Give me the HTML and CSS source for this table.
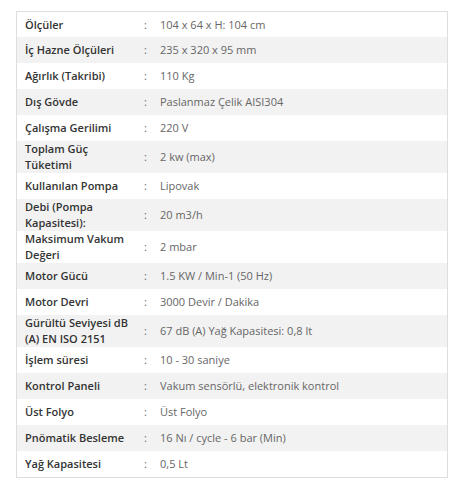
FILE: index.html
```html
<!DOCTYPE html>
<html lang="tr">
<head>
<meta charset="utf-8">
<link rel="stylesheet" href="styles.css">
</head>
<body>
<div class="spec-box">
<table class="spec">
<colgroup><col class="c-label"><col class="c-sep"><col class="c-val"></colgroup>
<tbody>
<tr><td class="lbl">Ölçüler</td><td class="sep">:</td><td class="val">104 x 64 x H: 104 cm</td></tr>
<tr><td class="lbl">İç Hazne Ölçüleri</td><td class="sep">:</td><td class="val">235 x 320 x 95 mm</td></tr>
<tr><td class="lbl">Ağırlık (Takribi)</td><td class="sep">:</td><td class="val">110 Kg</td></tr>
<tr><td class="lbl">Dış Gövde</td><td class="sep">:</td><td class="val">Paslanmaz Çelik AISI304</td></tr>
<tr><td class="lbl">Çalışma Gerilimi</td><td class="sep">:</td><td class="val">220 V</td></tr>
<tr><td class="lbl">Toplam Güç Tüketimi</td><td class="sep">:</td><td class="val">2 kw (max)</td></tr>
<tr><td class="lbl">Kullanılan Pompa</td><td class="sep">:</td><td class="val">Lipovak</td></tr>
<tr><td class="lbl">Debi (Pompa Kapasitesi):</td><td class="sep">:</td><td class="val">20 m3/h</td></tr>
<tr><td class="lbl">Maksimum Vakum Değeri</td><td class="sep">:</td><td class="val">2 mbar</td></tr>
<tr><td class="lbl">Motor Gücü</td><td class="sep">:</td><td class="val">1.5 KW / Min-1 (50 Hz)</td></tr>
<tr><td class="lbl">Motor Devri</td><td class="sep">:</td><td class="val">3000 Devir / Dakika</td></tr>
<tr><td class="lbl">Gürültü Seviyesi dB (A) EN ISO 2151</td><td class="sep">:</td><td class="val">67 dB (A) Yağ Kapasitesi: 0,8 lt</td></tr>
<tr><td class="lbl">İşlem süresi</td><td class="sep">:</td><td class="val">10 - 30 saniye</td></tr>
<tr><td class="lbl">Kontrol Paneli</td><td class="sep">:</td><td class="val">Vakum sensörlü, elektronik kontrol</td></tr>
<tr><td class="lbl">Üst Folyo</td><td class="sep">:</td><td class="val">Üst Folyo</td></tr>
<tr><td class="lbl">Pnömatik Besleme</td><td class="sep">:</td><td class="val">16 Nı / cycle - 6 bar (Min)</td></tr>
<tr><td class="lbl">Yağ Kapasitesi</td><td class="sep">:</td><td class="val">0,5 Lt</td></tr>
</tbody>
</table>
</div>
</body>
</html>
```
FILE: styles.css
```css
html, body {
  margin: 0;
  padding: 0;
  background: #fff;
}
body {
  padding: 11px 8px 0 16px;
  font-family: "Open Sans", "Noto Sans", sans-serif;
  font-size: 11px;
  line-height: 16px;
}
.spec-box {
  width: 430px;
  border: 1px solid #dedede;
}
.spec {
  width: 100%;
  border-collapse: collapse;
  table-layout: fixed;
}
.c-label { width: 119px; }
.c-sep { width: 16px; }
.spec tr:nth-child(even) td { background: #f2f2f2; }
.spec td {
  height: 26px;
  padding: 0 8px;
  vertical-align: middle;
}
.spec td.lbl {
  color: #333;
  font-weight: 600;
}
.spec td.sep {
  padding: 0 0 0 8px;
  color: #666;
}
.spec td.val {
  color: #666;
  padding-left: 8px;
}
.spec tr:first-child td { height: 25px; }
```
